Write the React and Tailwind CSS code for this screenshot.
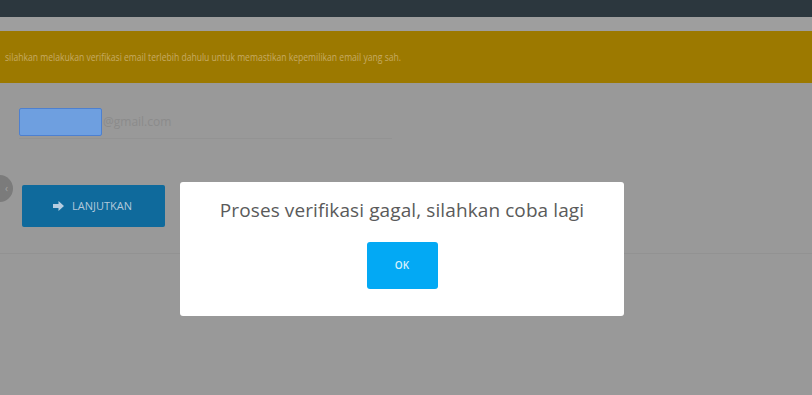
import React from 'react'

function ArrowIcon() {
  return (
    <svg width="11" height="10" viewBox="0 0 11 10" className="shrink-0">
      <path d="M0 3h5.5V0L11 5 5.5 10V7H0z" fill="#b7cde0" />
    </svg>
  )
}

export default function App() {
  return (
    <div className="relative w-[812px] h-[395px] overflow-hidden bg-[#999999] font-['Open_Sans',sans-serif]">
      {/* top bar */}
      <div className="h-[17px] bg-[#2c373e]"></div>
      <div className="h-[14px] bg-[#9e9e9e]"></div>

      {/* warning banner */}
      <div className="h-[52px] bg-[#9c7900] flex items-center px-[5px]">
        <span className="inline-block whitespace-nowrap origin-left scale-x-[0.78] text-[11px] text-[#c6aa62]">
          silahkan melakukan verifikasi email terlebih dahulu untuk memastikan kepemilikan email yang sah.
        </span>
      </div>

      {/* email field */}
      <div className="pt-[25px] pl-[19px]">
        <div className="w-[373px] border-b border-[#939393] pb-[2px] flex items-center">
          <div className="w-[83px] h-[28px] bg-[#6e9fe0] border border-[#4d80d0] rounded-[2px]"></div>
          <span className="ml-[1px] text-[12px] text-[#8b8b8b]">@gmail.com</span>
        </div>
      </div>

      {/* button row */}
      <div className="relative mt-[46px] pl-[22px] h-[42px]">
        <div className="absolute left-[-14px] top-[-10px] w-[27px] h-[27px] rounded-full bg-[#7b7b7b] flex items-center justify-end pr-[5px] text-[10px] text-[#a5a5a5]">
          ‹
        </div>
        <button className="w-[143px] h-[42px] bg-[#0f6a9c] rounded-[2px] flex items-center justify-center gap-[8px] text-[11px] text-[#b3c9db] pr-[2px]">
          <ArrowIcon />
          LANJUTKAN
        </button>
      </div>

      <div className="mt-[26px] border-t border-[#929292]"></div>

      {/* dialog */}
      <div className="absolute left-[180px] top-[182px] w-[444px] h-[134px] bg-white rounded-[3px] flex flex-col items-center">
        <p className="mt-[15px] text-[19px] leading-[26px] text-[#5a5a5a] tracking-[0.1px]">
          Proses verifikasi gagal, silahkan coba lagi
        </p>
        <button className="mt-[19px] w-[71px] h-[47px] bg-[#03a9f4] rounded-[3px] text-[10px] font-semibold text-[#d8f1fc]">
          OK
        </button>
      </div>
    </div>
  )
}
